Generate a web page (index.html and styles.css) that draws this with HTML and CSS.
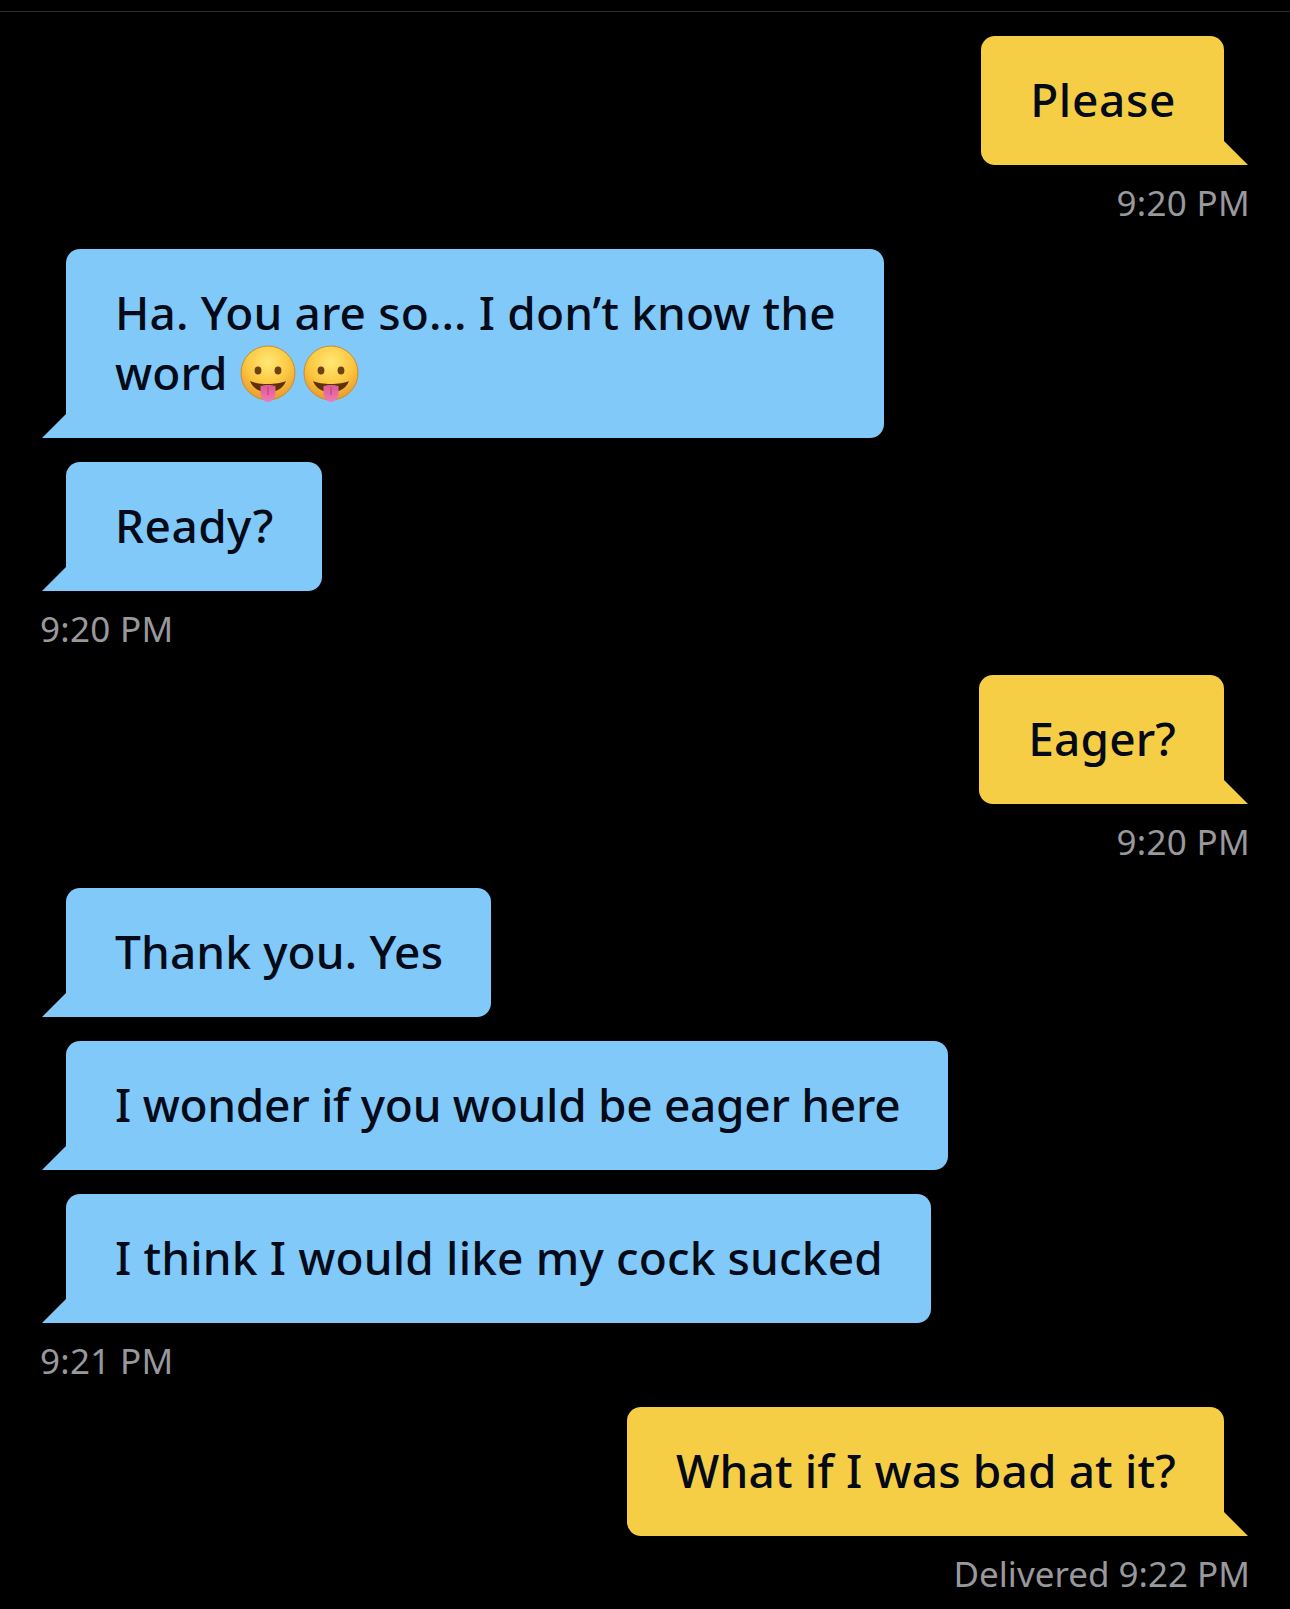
FILE: index.html
```html
<!DOCTYPE html>
<html>
<head>
<meta charset="utf-8">
<title>Chat</title>
<meta name="viewport" content="width=device-width, initial-scale=1.0">
<link rel="stylesheet" href="styles.css">
</head>
<body>

<svg class="defs" width="0" height="0">
    <defs>
        <radialGradient id="faceFill" cx="50%" cy="30%" r="75%">
            <stop offset="0%" stop-color="#ffe874"/>
            <stop offset="55%" stop-color="#fbc63f"/>
            <stop offset="100%" stop-color="#e8902a"/>
        </radialGradient>
        <linearGradient id="tongueFill" x1="0" y1="0" x2="0" y2="1">
            <stop offset="0%" stop-color="#dc5a96"/>
            <stop offset="100%" stop-color="#f07ab4"/>
        </linearGradient>
        <symbol id="tongueFace" viewBox="0 0 56 58">
            <circle cx="28" cy="28" r="27" fill="url(#faceFill)" stroke="#c98f2c" stroke-width="1"/>
            <ellipse cx="18" cy="25.5" rx="3.4" ry="4" fill="#6b4210"/>
            <ellipse cx="38" cy="25.5" rx="3.4" ry="4" fill="#6b4210"/>
            <path d="M10 36 C18 40 38 40 46 36 C43 44 36 47 28 47 C20 47 13 44 10 36 Z" fill="#5e3208"/>
            <path d="M20.5 41 C24 39.5 32 39.5 35.5 41 L35.5 48 C35.5 53 32 57 28 57 C24 57 20.5 53 20.5 48 Z" fill="url(#tongueFill)"/>
            <path d="M28 42 L28 50" stroke="#c93d7c" stroke-width="1.2" fill="none"/>
        </symbol>
    </defs>
</svg>

<div class="chat">

    <div class="group mine">
        <div class="bubble wide">Please</div>
        <div class="time">9:20 PM</div>
    </div>

    <div class="group theirs">
        <div class="bubble snug">Ha. You are so... I don’t know the<br>word <svg class="emoji first"><use href="#tongueFace"/></svg><svg class="emoji"><use href="#tongueFace"/></svg></div>
        <div class="bubble wide ready">Ready?</div>
        <div class="time">9:20 PM</div>
    </div>

    <div class="group mine">
        <div class="bubble loose">Eager?</div>
        <div class="time">9:20 PM</div>
    </div>

    <div class="group theirs">
        <div class="bubble snug">Thank you. Yes</div>
        <div class="bubble tight">I wonder if you would be eager here</div>
        <div class="bubble loose">I think I would like my cock sucked</div>
        <div class="time">9:21 PM</div>
    </div>

    <div class="group mine">
        <div class="bubble loose">What if I was bad at it?</div>
        <div class="time delivered">Delivered 9:22 PM</div>
    </div>

</div>

</body>
</html>
```

FILE: styles.css
```css
html, body {
    margin: 0;
    padding: 0;
    background-color: #000;
}

.defs {
    position: absolute;
}

.chat {
    margin-top: 11px;
    padding: 24px 40px 0;
    border-top: 1px solid #2c2c2e;
    font-family: "Noto Sans", sans-serif;
}

.group {
    display: flex;
    flex-direction: column;
    gap: 24px;
    margin-bottom: 24px;
}

.mine {
    align-items: flex-end;
}

.theirs {
    align-items: flex-start;
}

.bubble {
    position: relative;
    padding: 32.5px 48px 36.5px 49px;
    border-radius: 14px;
    font-size: 46px;
    font-weight: 500;
    line-height: 60px;
    white-space: nowrap;
    color: #050a18;
}

/* letter spacing per bubble, the reference font runs a bit wider on some words */
.wide {
    letter-spacing: 0.65px;
}

.wide.ready {
    letter-spacing: 0.45px;
}

.loose {
    letter-spacing: 0.14px;
}

.snug {
    letter-spacing: 0.11px;
}

.tight {
    letter-spacing: -0.3px;
}

.bubble:after {
    content: "";
    position: absolute;
    bottom: 0;
    width: 0;
    height: 0;
    border-style: solid;
}

.mine .bubble {
    margin-right: 26px;
    border-bottom-right-radius: 0;
    background-color: #f6ce46;
}

.mine .bubble:after {
    right: -24px;
    border-width: 24px 0 0 24px;
    border-color: transparent transparent transparent #f6ce46;
}

.theirs .bubble {
    margin-left: 26px;
    border-bottom-left-radius: 0;
    background-color: #80c9f8;
}

.theirs .bubble:after {
    left: -24px;
    border-width: 24px 24px 0 0;
    border-color: transparent #80c9f8 transparent transparent;
}

.time {
    margin-top: -8px;
    font-size: 35px;
    line-height: 44px;
    letter-spacing: 0.3px;
    color: #98989d;
}

.time.delivered {
    letter-spacing: 0;
}

.emoji {
    width: 56px;
    height: 58px;
    margin: -20px 0 -20px 7px;
    vertical-align: 7px;
}

.emoji.first {
    margin-left: 0;
}
```
